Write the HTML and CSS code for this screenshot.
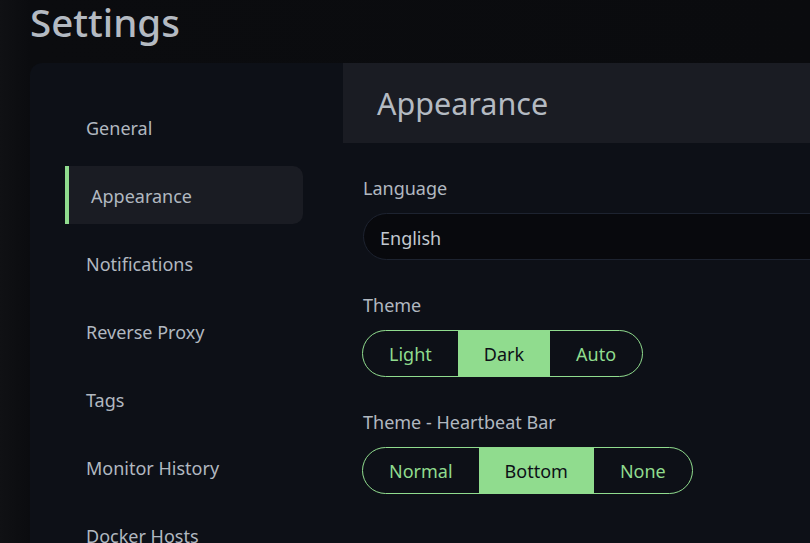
FILE: index.html
```
<!DOCTYPE html>
<html lang="en">
<head>
<meta charset="utf-8">
<title>Settings</title>
<link rel="stylesheet" href="styles.css">
</head>
<body>
<div class="page">
  <h1 class="title">Settings</h1>
  <div class="card">
    <nav class="menu">
      <div class="menu-item">General</div>
      <div class="menu-item active">Appearance</div>
      <div class="menu-item">Notifications</div>
      <div class="menu-item">Reverse Proxy</div>
      <div class="menu-item">Tags</div>
      <div class="menu-item">Monitor History</div>
      <div class="menu-item">Docker Hosts</div>
    </nav>
    <section class="content">
      <div class="content-header">Appearance</div>
      <div class="content-body">
        <div class="field">
          <div class="label">Language</div>
          <div class="select">English</div>
        </div>
        <div class="field">
          <div class="label">Theme</div>
          <div class="btn-group">
            <div class="btn">Light</div>
            <div class="btn on">Dark</div>
            <div class="btn">Auto</div>
          </div>
        </div>
        <div class="field">
          <div class="label">Theme - Heartbeat Bar</div>
          <div class="btn-group">
            <div class="btn">Normal</div>
            <div class="btn on">Bottom</div>
            <div class="btn">None</div>
          </div>
        </div>
      </div>
    </section>
  </div>
</div>
</body>
</html>
```
FILE: styles.css
```
html, body {
  margin: 0;
  padding: 0;
  height: 100%;
  overflow: hidden;
}
body {
  background: linear-gradient(90deg, #101114 0px, #0b0c0f 30px, #0a0b0e 100%);
  color: #b1b8c0;
  font-family: "Noto Sans", "Open Sans", "DejaVu Sans", sans-serif;
  font-size: 18px;
}
.page {
  padding-left: 30px;
}
.title {
  margin: 0;
  height: 63px;
  font-size: 38.5px;
  font-weight: 500;
  line-height: 44px;
  color: #b4bac2;
}
.card {
  display: flex;
  width: 1000px;
  height: 600px;
  background: #0d1017;
  border-radius: 12px 0 0 0;
}
.menu {
  width: 313px;
  flex: none;
  padding: 35px 40px 0 35px;
  box-sizing: border-box;
  display: flex;
  flex-direction: column;
  gap: 10px;
}
.menu-item {
  height: 58px;
  display: flex;
  align-items: center;
  padding-left: 21px;
  padding-top: 1px;
  border-radius: 10px;
  box-sizing: border-box;
}
.menu-item.active {
  background: #1a1c23;
  border-left: 4px solid #90dc8e;
  border-radius: 0 10px 10px 0;
  padding-left: 22px;
}
.content {
  flex: 1;
}
.content-header {
  height: 80px;
  background: #1a1c23;
  display: flex;
  align-items: center;
  padding-left: 34px;
  font-size: 30.5px;
  color: #b4bac2;
}
.content-body {
  padding: 32px 0 0 20px;
}
.field {
  margin-bottom: 32px;
}
.label {
  line-height: 27px;
  margin-bottom: 11px;
}
.select {
  height: 47px;
  box-sizing: border-box;
  border: 1px solid #1d2330;
  background: #08090d;
  border-radius: 24px 0 0 24px;
  display: flex;
  align-items: center;
  padding-left: 16px;
  padding-top: 2px;
  color: #c2c8cf;
}
.btn-group {
  display: inline-flex;
  height: 47px;
  border: 1px solid #90dc8e;
  border-radius: 24px;
  overflow: hidden;
  box-sizing: border-box;
  margin-left: -1px;
}
.btn {
  display: flex;
  align-items: center;
  padding: 0 26px;
  color: #90dc8e;
}
.btn.on {
  background: #90dc8e;
  color: #0d1017;
}
```
